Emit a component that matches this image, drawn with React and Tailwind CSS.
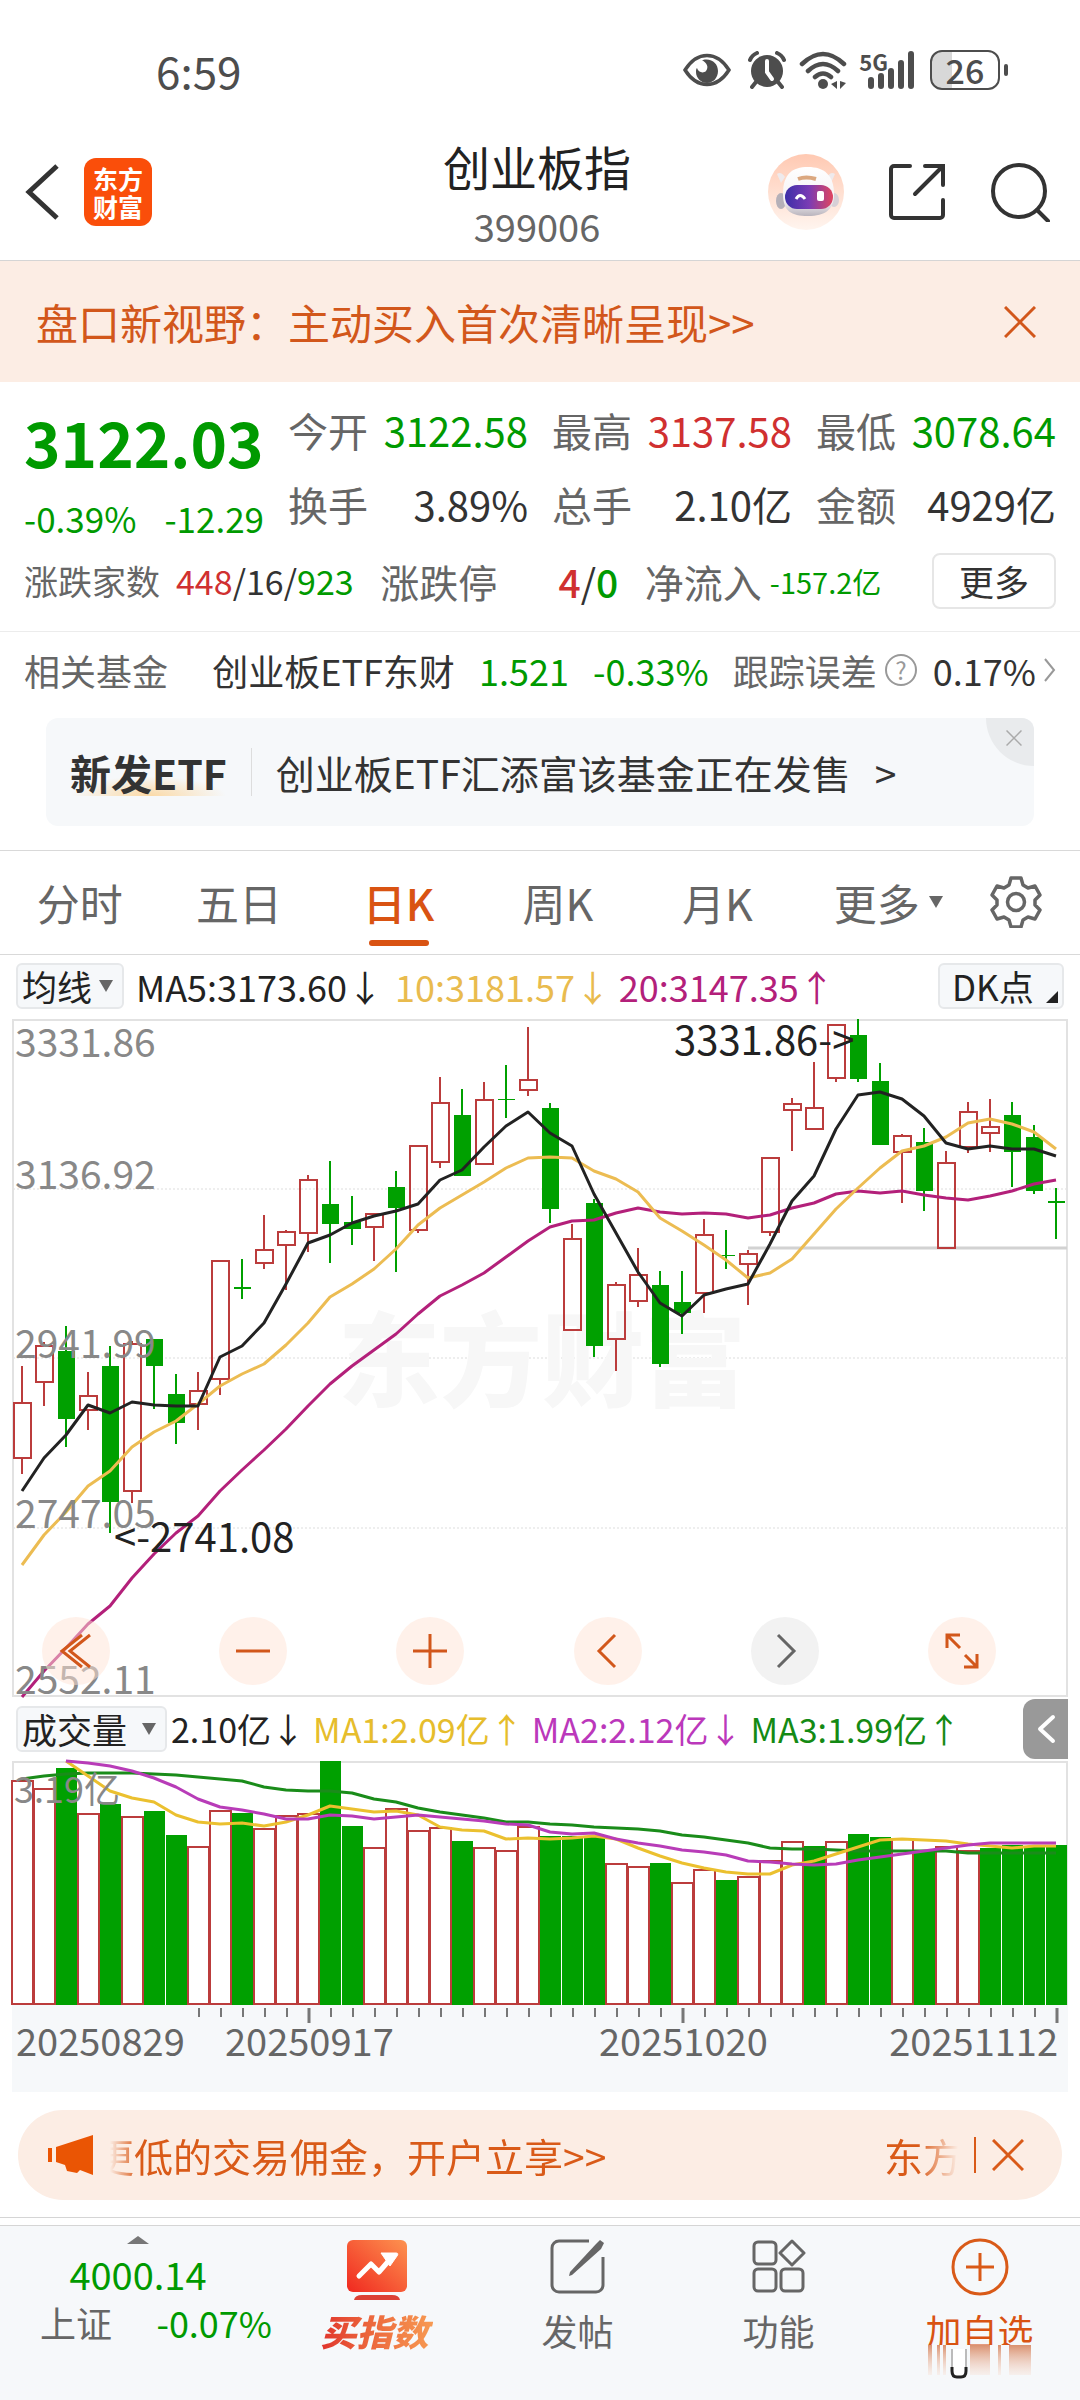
import React, { useState } from 'react';

const GREEN = '#00a000';
const RED = '#bb3c3c';

// body top, body bottom, high, low, 1 = up / 0 = down
const CANDLES = [
  [384, 439, 347, 455, 1], [327, 363, 323, 387, 1], [332, 400, 307, 428, 0], [377, 391, 353, 411, 1],
  [347, 483, 327, 514, 0], [325, 472, 322, 484, 1], [320, 347, 320, 390, 0], [375, 404, 355, 425, 0],
  [372, 385, 353, 411, 1], [242, 360, 242, 376, 1], [268, 270, 240, 280, 0], [231, 244, 196, 250, 1],
  [213, 226, 211, 271, 1], [161, 214, 156, 233, 1], [185, 205, 142, 244, 0], [203, 210, 177, 226, 0],
  [195, 208, 194, 242, 1], [168, 189, 152, 253, 0], [127, 211, 127, 214, 1], [84, 143, 58, 149, 1],
  [96, 157, 70, 157, 0], [81, 145, 63, 145, 1], [80, 81, 46, 99, 0], [61, 71, 8, 77, 1],
  [89, 190, 84, 204, 0], [220, 311, 205, 311, 1], [184, 327, 180, 338, 0], [266, 320, 263, 352, 1],
  [256, 282, 229, 288, 1], [266, 345, 252, 348, 0], [283, 294, 252, 315, 0], [216, 274, 200, 294, 1],
  [236, 237, 211, 250, 0], [235, 245, 231, 286, 1], [139, 213, 139, 217, 1], [85, 91, 79, 132, 1],
  [89, 110, 43, 110, 1], [6, 59, 6, 63, 1], [16, 60, 0, 63, 0], [62, 126, 44, 126, 0],
  [117, 133, 115, 184, 1], [123, 172, 109, 192, 0], [144, 229, 132, 229, 1], [93, 128, 83, 134, 1],
  [108, 114, 80, 133, 1], [96, 133, 83, 168, 0], [118, 172, 106, 175, 0], [182, 184, 169, 220, 0],
];

const MA5 = [472, 439, 416, 386, 394, 383, 386, 387, 387, 338, 327, 304, 265, 224, 216, 204, 197, 192, 185, 161, 151, 128, 107, 93, 114, 127, 175, 214, 253, 284, 297, 276, 270, 265, 225, 182, 157, 110, 76, 73, 80, 97, 124, 130, 127, 130, 130, 137];
const MA10 = [546, 516, 493, 467, 452, 428, 413, 402, 385, 367, 355, 345, 326, 304, 278, 265, 250, 230, 206, 189, 176, 163, 149, 139, 138, 139, 152, 160, 173, 199, 212, 226, 241, 259, 254, 240, 215, 190, 169, 149, 132, 127, 118, 104, 100, 105, 113, 130];
const MA20 = [678, 652, 629, 605, 587, 559, 535, 514, 497, 472, 451, 431, 410, 387, 365, 347, 331, 315, 295, 277, 266, 254, 238, 222, 208, 202, 201, 194, 189, 193, 195, 194, 195, 199, 196, 189, 184, 175, 172, 174, 172, 176, 179, 181, 177, 172, 165, 161];

const VOLUMES = [19, 27, 7, 52, 43, 55, 50, 74, 85, 49, 52, 67, 54, 52, 0, 65, 86, 47, 69, 66, 80, 86, 89, 65, 75, 75, 76, 102, 105, 102, 121, 108, 119, 115, 99, 80, 85, 80, 73, 76, 77, 90, 85, 89, 87, 84, 85, 84];
const DOWN_VOLUMES = [2, 4, 6, 7, 10, 14, 15, 20, 24, 25, 26, 29, 32, 36, 38, 39, 41, 44, 45, 46, 47];
// the first two averages enter the plot from above at the third bar
const VMA1 = [0, 15, 30, 37, 41, 54, 61, 63, 62, 65, 61, 54, 45, 48, 51, 50, 54, 66, 69, 70, 78, 77, 78, 77, 75, 78, 87, 95, 102, 107, 111, 113, 113, 104, 100, 93, 86, 79, 78, 79, 80, 83, 85, 87, 85, 85];
const VMA2 = [0, 2, 5, 10, 17, 26, 38, 46, 49, 53, 58, 58, 54, 55, 58, 56, 54, 56, 58, 60, 63, 64, 71, 73, 72, 78, 82, 85, 89, 91, 94, 100, 101, 103, 104, 103, 99, 96, 93, 90, 87, 84, 82, 82, 82, 82];
const VMA3 = [18, 15, 13, 12, 12, 12, 13, 14, 16, 18, 20, 26, 29, 30, 30, 32, 38, 41, 47, 51, 54, 57, 61, 61, 63, 64, 66, 67, 68, 70, 74, 76, 79, 82, 87, 88, 88, 89, 90, 90, 90, 90, 90, 92, 92, 92, 92, 92];

const PRICE_LABELS = [['3331.86', 38], ['3136.92', 170], ['2941.99', 339], ['2747.05', 509], ['2552.11', 675]];

const cx = (i) => 10 + i * 22;
const points = (values, start = 0) => values.map((y, i) => `${cx(i + start)},${y}`).join(' ');

function Line({ values, start, color }) {
  return <polyline points={points(values, start)} fill="none" stroke={color} strokeWidth="3" strokeLinejoin="round" />;
}

function Caret({ className = '' }) {
  return (
    <svg viewBox="0 0 16 12" className={`h-3 w-4 shrink-0 ${className}`} aria-hidden="true">
      <path d="M1 0h14L8 12z" fill="#666" />
    </svg>
  );
}

function CloseIcon({ className }) {
  return (
    <svg viewBox="0 0 32 32" className={className} fill="none" stroke="currentColor" strokeWidth="3" aria-hidden="true">
      <path d="M1 1l30 30M31 1L1 31" />
    </svg>
  );
}

function ChipSelect({ label, option, className }) {
  return (
    <label className={`flex h-[46px] items-center justify-between rounded-md border-2 border-[#e6e8ea] bg-[#f6f8fa] pr-2 pl-1 ${className}`}>
      <select aria-label={label} className="appearance-none bg-transparent text-[35px] leading-[42px] text-[#222] outline-none">
        <option>{option}</option>
      </select>
      <Caret />
    </label>
  );
}

function StatusBar() {
  return (
    <div className="flex items-center justify-between pt-12 pr-[72px] pb-[3px] pl-[156px] text-[#4d4d4d]">
      <span className="text-[44px] leading-[44px]">6:59</span>
      <div className="flex items-center">
        <svg viewBox="0 0 48 34" className="h-[34px] w-12" aria-label="护眼模式">
          <path d="M2 17C9 6 16 2.500 24 2.500S39 6 46 17c-7 11-14 14.500-22 14.500S9 28 2 17z" fill="none" stroke="currentColor" strokeWidth="3.500" />
          <path d="M20 7c9-2 15 4 15 11 0 7-5 12-11 12s-11-5-11-11c0-2 0-3 1-4 1 4 6 6 9 3 3-4 1-8-4-11z" fill="currentColor" />
        </svg>
        <svg viewBox="0 0 40 38" className="ml-4 h-[38px] w-10" aria-label="闹钟">
          <circle cx="20" cy="20" r="16" fill="currentColor" />
          <path d="M3 9q2-5 7-7M37 9q-2-5-7-7M9 31l-4 5M31 31l4 5" stroke="currentColor" strokeWidth="4" fill="none" strokeLinecap="round" />
          <path d="M20 10v11l5 7" stroke="#fff" strokeWidth="4" fill="none" strokeLinecap="round" />
        </svg>
        <svg viewBox="0 0 48 38" className="ml-3 h-[38px] w-12" aria-label="无线网络">
          <path d="M3 13Q24-7 45 13M9 20q15-14 30 0M16 26q8-7 16 0" fill="none" stroke="currentColor" strokeWidth="4.500" strokeLinecap="round" />
          <circle cx="24" cy="33" r="5" fill="currentColor" />
          <path d="M38 30v8l-6-5zM41 30v8l6-6z" fill="currentColor" />
        </svg>
        <div className="ml-3 flex items-start">
          <span className="text-[22px] leading-5 font-bold">5G</span>
          <svg viewBox="0 0 46 38" className="-ml-5 h-[38px] w-[46px]" aria-label="信号">
            <path d="M3 29v6M13 25v10M23 20v15M33 12v23M43 3v32" stroke="currentColor" strokeWidth="6" strokeLinecap="round" />
          </svg>
        </div>
        <div className="ml-4 flex items-center gap-1">
          <div className="flex h-10 w-[70px] items-center justify-center rounded-xl border-2 border-[#4d4d4d] bg-linear-to-r from-[#d8d8d8] from-30% to-white to-30% text-[34px] leading-8 font-medium">
            26
          </div>
          <span className="h-3 w-1 rounded-full bg-[#4d4d4d]" />
        </div>
      </div>
    </div>
  );
}

function RobotIcon() {
  return (
    <svg viewBox="0 0 76 76" className="size-[76px]" aria-hidden="true">
      <defs>
        <linearGradient id="halo" x2="0" y2="1">
          <stop offset="0" stopColor="#ffc9b2" />
          <stop offset="1" stopColor="#fff5ef" />
        </linearGradient>
        <linearGradient id="visor">
          <stop offset="0" stopColor="#3d2fa8" />
          <stop offset=".5" stopColor="#7a3bb4" />
          <stop offset="1" stopColor="#e0455f" />
        </linearGradient>
        <linearGradient id="shell" x2="0" y2="1">
          <stop offset="0" stopColor="#fff" />
          <stop offset=".7" stopColor="#f4f1f3" />
          <stop offset="1" stopColor="#b9b4bd" />
        </linearGradient>
      </defs>
      <circle cx="38" cy="38" r="38" fill="url(#halo)" />
      <path d="M9 20q4-3 8 3l-4 6zM67 20q-4-3-8 3l4 6z" fill="#efeaec" />
      <ellipse cx="13" cy="47" rx="5" ry="8" fill="#b5b0b8" />
      <ellipse cx="66" cy="46" rx="5" ry="7" fill="#d7d0d6" />
      <path d="M15 40C15 20 24 13 40 13s26 8 26 27c0 16-9 22-26 22S15 57 15 40z" fill="url(#shell)" />
      <path d="M30 25q8-3 18 0" stroke="#dba77f" strokeWidth="4" fill="none" />
      <rect x="17" y="31" width="48" height="24" rx="12" fill="url(#visor)" />
      <path d="M28 45q4-7 9 0" stroke="#fff" strokeWidth="3" fill="none" />
      <rect x="49" y="37" width="7" height="10" rx="2" fill="#fff" />
    </svg>
  );
}

function Header() {
  return (
    <header className="grid grid-cols-[1fr_auto_1fr] items-center border-b border-[#d5d5d5] pt-[43px] pr-[30px] pb-[14px] pl-6">
      <div className="flex items-center gap-6">
        <button aria-label="返回">
          <svg viewBox="0 0 36 56" className="h-14 w-9" fill="none" stroke="#333" strokeWidth="5">
            <path d="M33 2L5 28l28 26" />
          </svg>
        </button>
        <a href="#home" className="grid size-[68px] place-content-center rounded-xl bg-[#fa4e0a] text-center text-[25px] leading-7 font-bold text-white">
          <span>东方</span>
          <span>财富</span>
        </a>
      </div>
      <div className="flex flex-col items-center gap-3">
        <h1 className="text-[47px] leading-[56px] text-[#222]">创业板指</h1>
        <p className="text-[38px] leading-10 text-[#666]">399006</p>
      </div>
      <div className="flex items-center justify-end gap-11 text-[#333]">
        <button aria-label="智能助手"><RobotIcon /></button>
        <button aria-label="分享">
          <svg viewBox="0 0 58 58" className="size-[58px]" fill="none" stroke="currentColor" strokeWidth="4" strokeLinecap="round">
            <path d="M22 3H6a3 3 0 0 0-3 3v46a3 3 0 0 0 3 3h46a3 3 0 0 0 3-3V37" />
            <path d="M37 3h18v19M54 4L27 31" />
          </svg>
        </button>
        <button aria-label="搜索">
          <svg viewBox="0 0 60 60" className="size-[60px]" fill="none" stroke="currentColor" strokeWidth="4" strokeLinecap="round">
            <circle cx="29" cy="29" r="26" />
            <path d="M47 48l11 11" />
          </svg>
        </button>
      </div>
    </header>
  );
}

function Stat({ label, value, tone = 'text-[#333]' }) {
  return (
    <div className="flex justify-between text-[40px] leading-[48px] whitespace-nowrap">
      <dt className="text-[#666]">{label}</dt>
      <dd className={tone}>{value}</dd>
    </div>
  );
}

function Quote() {
  return (
    <section className="border-b border-[#ececec] px-6 pt-6 pb-[22px]">
      <div className="flex">
        <div className="w-[264px] shrink-0 text-[#009a00]">
          <p className="text-[62px] leading-[70px] font-bold">3122.03</p>
          <p className="mt-6 flex justify-between pr-6 text-[35px] leading-9">
            <span>-0.39%</span>
            <span>-12.29</span>
          </p>
        </div>
        <dl className="grid flex-1 grid-cols-3 content-start gap-x-6 gap-y-[26px]">
          <Stat label="今开" value="3122.58" tone="text-[#009a00]" />
          <Stat label="最高" value="3137.58" tone="text-[#d03030]" />
          <Stat label="最低" value="3078.64" tone="text-[#009a00]" />
          <Stat label="换手" value="3.89%" />
          <Stat label="总手" value="2.10亿" />
          <Stat label="金额" value="4929亿" />
        </dl>
      </div>
      <div className="mt-[17px] flex items-center justify-between text-[39px] leading-[48px] whitespace-nowrap text-[#666]">
        <div className="flex items-center gap-4 text-[34px]">
          <span>涨跌家数</span>
          <span className="text-[#333]"><span className="text-[#d03030]">448</span>/16/<span className="text-[#009a00]">923</span></span>
        </div>
        <div className="flex w-[238px] justify-between">
          <span>涨跌停</span>
          <span className="text-[#333]"><span className="font-medium text-[#d03030]">4</span>/<span className="font-medium text-[#009a00]">0</span></span>
        </div>
        <div className="flex items-center gap-2">
          <span>净流入</span>
          <span className="text-[29px] text-[#009a00]">-157.2亿</span>
        </div>
        <button className="ml-6 h-14 w-[124px] rounded-lg border-2 border-[#e6e6e6] text-[35px] leading-[48px] text-[#333]">更多</button>
      </div>
    </section>
  );
}

function Funds() {
  return (
    <section className="pt-4 pb-6">
      <a href="#fund" className="flex items-center justify-between px-6 text-4xl leading-[44px] whitespace-nowrap text-[#333]">
        <span className="mr-5 text-[#666]">相关基金</span>
        <span>创业板ETF东财</span>
        <span className="text-[#009a00]">1.521</span>
        <span className="text-[#009a00]">-0.33%</span>
        <span className="flex items-center gap-2">
          <span className="text-[#666]">跟踪误差</span>
          <span className="mr-2 grid size-8 place-content-center rounded-full border-2 border-[#999] text-2xl leading-7 text-[#999]">?</span>
          0.17%
          <svg viewBox="0 0 12 24" className="h-6 w-3" fill="none" stroke="#999" strokeWidth="2"><path d="M1 1l9 11L1 23" /></svg>
        </span>
      </a>
      <div className="relative mx-[46px] mt-[26px] flex h-[108px] items-center overflow-hidden rounded-xl bg-[#f6f8fa] pl-6 text-[39px] leading-[48px] whitespace-nowrap text-[#333]">
        <strong className="bg-[radial-gradient(ellipse_at_50%_100%,#fbd9a5_0%,transparent_70%)] bg-[length:100%_20px] bg-bottom bg-no-repeat text-[41px] font-bold">新发ETF</strong>
        <span className="mx-6 h-12 w-px bg-[#ddd]" />
        <a href="#etf">创业板ETF汇添富该基金正在发售</a>
        <span className="ml-6">&gt;</span>
        <button aria-label="关闭" className="absolute top-0 right-0 grid size-12 place-content-center rounded-bl-full bg-[#e9ebed] pb-2 pl-2 text-[#aaa]">
          <CloseIcon className="size-4" />
        </button>
      </div>
    </section>
  );
}

function Tabs() {
  const [active, setActive] = useState('日K');
  return (
    <nav className="grid grid-cols-[repeat(6,4fr)_3fr] border-y border-[#d9d9d9] pt-[25px] pr-1 pb-2 text-[43px] leading-[52px] text-[#666]">
      {['分时', '五日', '日K', '周K', '月K', '更多'].map((tab) => (
        <button key={tab} onClick={() => setActive(tab)} className="flex flex-col items-center gap-3">
          <span className={tab === active ? 'font-medium text-[#d95312]' : 'relative'}>
            {tab}
            {tab === '更多' && <Caret className="absolute top-5 left-full ml-2" />}
          </span>
          <span className={tab === active ? 'h-[6px] w-[60px] rounded-full bg-[#d95312]' : 'h-[6px]'} />
        </button>
      ))}
      <button aria-label="设置" className="flex h-[52px] items-center justify-center">
        <svg viewBox="0 0 52 52" className="size-[52px]" fill="none" stroke="currentColor" strokeWidth="3.500" strokeLinejoin="round">
          <path d="M21 2h10l2 7 5 3 7-2 5 9-5 5v5l5 5-5 9-7-2-5 3-2 7H21l-2-7-5-3-7 2-5-9 5-5v-5l-5-5 5-9 7 2 5-3z" />
          <circle cx="26" cy="26" r="8.500" />
        </svg>
      </button>
    </nav>
  );
}

function CandleChart() {
  return (
    <svg viewBox="0 0 1056 678" className="block w-full overflow-visible" role="img" aria-label="日K线图">
      <path d="M1 170h1054M1 339h1054M1 509h1054" stroke="#ddd" strokeDasharray="2 2" />
      <text x="326" y="380" fontSize="102" fontWeight="900" fill="#f7f7f7">东方财富</text>
      <rect x="1" y="1" width="1054" height="676" fill="none" stroke="#e2e2e2" strokeWidth="2" />
      <path d="M736 229h319" stroke="#d2d2d2" strokeWidth="3" />
      {CANDLES.map(([top, bottom, high, low, up], i) => (
        <g key={i} stroke={up ? RED : GREEN} strokeWidth="2">
          <path d={`M${cx(i)} ${high}V${top}M${cx(i)} ${bottom}V${low}`} />
          {up
            ? <rect x={cx(i) - 8} y={top} width="17" height={bottom - top} fill="none" />
            : <rect x={cx(i) - 8} y={top} width="17" height={bottom - top} fill={GREEN} stroke="none" />}
        </g>
      ))}
      <Line values={MA20} color="#b3207a" />
      <Line values={MA10} color="#ecbc52" />
      <Line values={MA5} color="#222" />
      <g fontSize="39" fill="#888">
        {PRICE_LABELS.map(([label, y]) => <text key={label} x="3" y={y}>{label}</text>)}
      </g>
      <g fontSize="40" fill="#222">
        <text x="662" y="36">3331.86-&gt;</text>
        <text x="102" y="533">&lt;-2741.08</text>
      </g>
    </svg>
  );
}

function VolumeChart() {
  return (
    <svg viewBox="0 0 1056 331" className="block w-full overflow-visible" role="img" aria-label="成交量图">
      <rect y="244" width="1056" height="87" fill="#f6f8fa" />
      <path d="M1 244V1h1054v243" fill="none" stroke="#e2e2e2" strokeWidth="2" />
      {VOLUMES.map((top, i) => (
        DOWN_VOLUMES.includes(i)
          ? <rect key={i} x={i * 22} y={top} width="21" height={244 - top} fill={GREEN} />
          : <rect key={i} x={i * 22} y={top + 1} width="21" height={242 - top} fill="#fff" stroke={RED} strokeWidth="2" />
      ))}
      <Line values={VMA3} color="#1a8c1a" />
      <Line values={VMA1} start={2} color="#ebc02f" />
      <Line values={VMA2} start={2} color="#b83cb8" />
      <text x="2" y="42" fontSize="36" fill="#888">3.19亿</text>
      {VOLUMES.map((_, i) => i > 7 && (
        <path key={i} d={i === 13 || i === 30 || i === 47 ? `M${cx(i) + 1} 247v15` : `M${cx(i) + 1} 247v9`} stroke="#777" strokeWidth={i === 13 || i === 30 || i === 47 ? 3 : 2} />
      ))}
      <g fontSize="38" fill="#666">
        <text x="4" y="295">20250829</text>
        <text x="213" y="295">20250917</text>
        <text x="587" y="295">20251020</text>
        <text x="1046" y="295" textAnchor="end">20251112</text>
      </g>
    </svg>
  );
}

const TOOLS = [
  ['快退', 'M26 4L6 20l20 16M34 4L14 20l20 16'],
  ['缩小', 'M3 20h34'],
  ['放大', 'M3 20h34M20 3v34'],
  ['左移', 'M27 4L11 20l16 16'],
  ['右移', 'M13 4l16 16-16 16'],
  ['全屏', 'M18 4H5v13M6 5l12 12M35 23v13H22M34 35L23 24'],
];

function Chart() {
  return (
    <section className="px-3">
      <div className="flex items-center justify-between px-1 pt-2 pb-[10px]">
        <div className="flex items-center text-4xl leading-[46px] whitespace-nowrap">
          <ChipSelect label="主图指标" option="均线" className="w-[108px]" />
          <span className="ml-3 text-[#222]">MA5:3173.60↓</span>
          <span className="ml-3 text-[#e9bb4e]">10:3181.57↓</span>
          <span className="ml-2 text-[#b3207a]">20:3147.35↑</span>
        </div>
        <button className="relative h-[46px] w-[126px] rounded-md border-2 border-[#e6e8ea] bg-[#f6f8fa] pl-3 text-left text-[35px] leading-[42px] text-[#222]">
          DK点
          <svg viewBox="0 0 12 12" className="absolute right-1 bottom-1 size-3"><path d="M12 0v12H0z" fill="#222" /></svg>
        </button>
      </div>
      <div className="relative">
        <CandleChart />
        <div className="absolute right-[72px] bottom-3 left-[30px] flex justify-between">
          {TOOLS.map(([name, d]) => (
            <button
              key={name}
              aria-label={name}
              className={name === '右移'
                ? 'grid size-[68px] place-content-center rounded-full bg-[#e9e9e9]/60 text-[#666]'
                : 'grid size-[68px] place-content-center rounded-full bg-[#ffe3d5]/50 text-[#d2571b]'}
            >
              <svg viewBox="0 0 40 40" className="size-10" fill="none" stroke="currentColor" strokeWidth="3"><path d={d} /></svg>
            </button>
          ))}
        </div>
      </div>
      <div className="flex h-16 items-center justify-between pl-1">
        <div className="flex items-center text-[34px] leading-[46px] whitespace-nowrap">
          <ChipSelect label="副图指标" option="成交量" className="w-[151px]" />
          <span className="ml-1 text-[#222]">2.10亿↓</span>
          <span className="ml-2 text-[#e6bd2c]">MA1:2.09亿↑</span>
          <span className="ml-2 text-[#bb38bb]">MA2:2.12亿↓</span>
          <span className="ml-2 text-[#148a14]">MA3:1.99亿↑</span>
        </div>
        <button aria-label="展开" className="grid h-[60px] w-[45px] place-content-center rounded-l-xl bg-[#999]">
          <svg viewBox="0 0 20 30" className="h-[30px] w-5" fill="none" stroke="#fff" strokeWidth="4" strokeLinecap="round" strokeLinejoin="round"><path d="M17 3L4 15l13 12" /></svg>
        </button>
      </div>
      <VolumeChart />
    </section>
  );
}

function Notice() {
  return (
    <div className="border-b border-[#d5d5d5] px-[18px] pt-[18px] pb-[17px]">
      <div className="flex h-[90px] items-center rounded-full bg-[#fcede4] pr-[38px] pl-[30px] text-[39px] leading-[48px] text-[#d95a18]">
        <svg viewBox="0 0 46 40" className="h-10 w-[46px] shrink-0" fill="#ea5504" aria-hidden="true">
          <path d="M0 13h4v14H0zM8 12L45 0v40l-13-5-3 3-10-2-2-6-9-3z" />
        </svg>
        <div className="ml-4 flex flex-1 justify-between overflow-hidden whitespace-nowrap [mask-image:linear-gradient(to_right,transparent,black_28px,black_calc(100%_-_40px),transparent)]">
          <a href="#account" className="flex w-0 flex-1">
            <span className="flex w-6 shrink-0 justify-end overflow-hidden">更</span>
            低的交易佣金，开户立享&gt;&gt;
          </a>
          <span className="w-[74px] overflow-hidden">东方</span>
        </div>
        <span className="ml-4 h-9 w-[2px] bg-[#d95a18]" />
        <button aria-label="关闭" className="ml-4"><CloseIcon className="size-8" /></button>
      </div>
    </div>
  );
}

function NavItem({ href, label, children, className = 'text-[#666]' }) {
  return (
    <a href={href} className="relative flex flex-col items-center pt-3">
      {children}
      <span className={`mt-[6px] text-4xl leading-[48px] ${className}`}>{label}</span>
    </a>
  );
}

function BottomNav() {
  return (
    <nav className="mt-[7px] grid flex-1 grid-cols-[276px_repeat(4,1fr)] border-t border-[#d5d5d5] bg-[#f6f8fa] pb-6">
      <a href="#sse" className="flex flex-col pt-[10px] text-4xl text-[#009a00]">
        <svg viewBox="0 0 22 8" className="mx-auto h-2 w-[22px]"><path d="M11 0l11 8H0z" fill="#777" /></svg>
        <span className="mt-[6px] text-center text-[38px] leading-[48px]">4000.14</span>
        <span className="flex justify-between pr-1 pl-10 leading-[48px]">
          <span className="text-[#666]">上证</span>
          -0.07%
        </span>
      </a>
      <NavItem href="#buy" label="买指数" className="bg-linear-to-r from-[#e0322c] to-[#f79a52] bg-clip-text pr-1 font-black text-transparent italic">
        <svg viewBox="0 0 60 62" className="h-[62px] w-[60px]" aria-hidden="true">
          <defs>
            <linearGradient id="buy" x1="0" y1="1" x2="1" y2="0">
              <stop offset="0" stopColor="#f0281f" />
              <stop offset="1" stopColor="#fd9350" />
            </linearGradient>
          </defs>
          <rect y="2" width="60" height="52" rx="6" fill="url(#buy)" />
          <path d="M7 62q1-5 8-5h30q7 0 8 5z" fill="#dc4034" />
          <path d="M12 38l12-12 8 8 13-15" fill="none" stroke="#fff" strokeWidth="5" strokeLinejoin="round" strokeLinecap="round" />
          <path d="M34 15h15q3 0 1 3l-7 10z" fill="#fff" stroke="#fff" strokeLinejoin="round" />
        </svg>
      </NavItem>
      <NavItem href="#post" label="发帖">
        <svg viewBox="0 0 56 62" className="h-[62px] w-14" fill="none" stroke="#666" strokeWidth="3" aria-hidden="true">
          <path d="M39 3H9a7 7 0 0 0-7 7v37a7 7 0 0 0 7 7h37a7 7 0 0 0 7-7V19" />
          <path d="M50 2l4 3-3 6-29 26-3 1 1-4L46 6z" fill="#666" stroke="none" />
        </svg>
      </NavItem>
      <NavItem href="#tools" label="功能">
        <svg viewBox="0 0 54 62" className="h-[62px] w-[54px]" fill="none" stroke="#666" strokeWidth="3" strokeLinejoin="round" aria-hidden="true">
          <rect x="2" y="4" width="22" height="22" rx="4" />
          <rect x="2" y="31" width="22" height="22" rx="4" />
          <rect x="29" y="31" width="22" height="22" rx="4" />
          <path d="M40 3l12 12-12 12-12-12z" />
        </svg>
      </NavItem>
      <NavItem href="#add" label="加自选" className="text-[#d95312]">
        <svg viewBox="0 0 58 62" className="h-[62px] w-[58px]" fill="none" stroke="#d95a18" strokeWidth="3" aria-hidden="true">
          <circle cx="29" cy="29" r="27" />
          <path d="M29 15v28M15 29h28" />
        </svg>
        <svg viewBox="0 0 160 34" className="absolute top-[119px] h-[34px] w-40" aria-hidden="true">
          <defs>
            <linearGradient id="smear" x2="0" y2="1">
              <stop offset="0" stopColor="#d2764c" stopOpacity=".8" />
              <stop offset="1" stopColor="#f7dccd" stopOpacity=".3" />
            </linearGradient>
          </defs>
          <path d="M20 0h116v34H20z" fill="#f6f8fa" />
          <path d="M28 0h4v30h-4zM37 0h3v30h-3zM43 0h3v30h-3zM70 0h20v30H70zM98 0h3v30h-3zM109 0h22v30h-22z" fill="url(#smear)" />
          <path d="M52 4v22q0 6 5 6h4q5 0 5-6V4" fill="#fff" stroke="#bbb" strokeWidth="2" />
          <path d="M52 22v4q0 6 5 6h4q5 0 5-6v-4" fill="none" stroke="#222" strokeWidth="3" />
        </svg>
      </NavItem>
    </nav>
  );
}

export default function App() {
  const [showBanner, setShowBanner] = useState(true);

  return (
    <main className="flex min-h-screen flex-col bg-white font-['Noto_Sans_CJK_SC',sans-serif]">
      <StatusBar />
      <Header />
      {showBanner && (
        <div className="flex items-center justify-between bg-[#fcede4] py-10 pr-11 pl-9 text-[42px] leading-[41px] text-[#d2571b]">
          <a href="#news">盘口新视野：主动买入首次清晰呈现&gt;&gt;</a>
          <button aria-label="关闭" onClick={() => setShowBanner(false)}><CloseIcon className="size-8" /></button>
        </div>
      )}
      <Quote />
      <Funds />
      <Tabs />
      <Chart />
      <Notice />
      <BottomNav />
    </main>
  );
}
